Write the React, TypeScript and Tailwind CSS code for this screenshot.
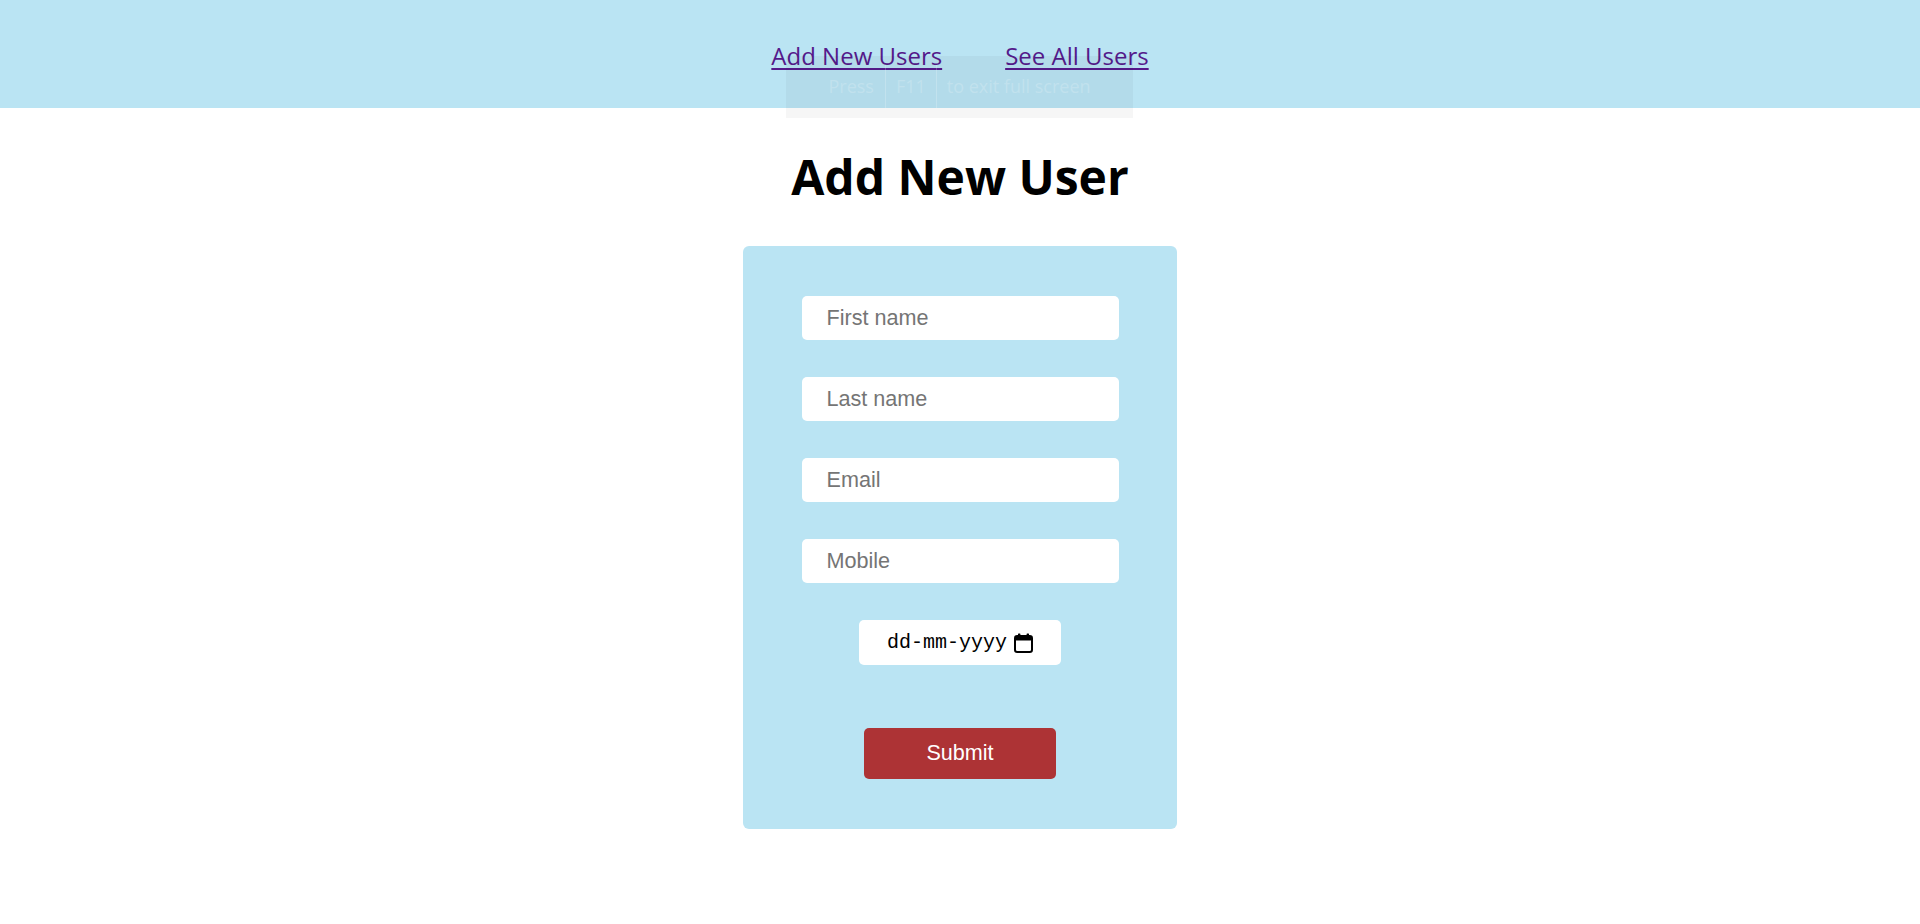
import { useState } from "react";

const FIELDS = [
  { name: "firstName", placeholder: "First name", type: "text" },
  { name: "lastName", placeholder: "Last name", type: "text" },
  { name: "email", placeholder: "Email", type: "email" },
  { name: "mobile", placeholder: "Mobile", type: "tel" }
] as const;

function CalendarGlyph() {
  return (
    <svg width="19" height="20" viewBox="0 0 19 20" aria-hidden>
      <rect x="4" y="0.5" width="2.4" height="4" rx="0.6" fill="#000" />
      <rect x="12.6" y="0.5" width="2.4" height="4" rx="0.6" fill="#000" />
      <rect x="1" y="3" width="17" height="16" rx="2.2" fill="none" stroke="#000" strokeWidth="2" />
      <rect x="1" y="3" width="17" height="4.5" rx="1.5" fill="#000" />
    </svg>
  );
}

function DateField() {
  return (
    <div className="mx-auto mt-[37px] flex h-[45px] w-[202px] items-center justify-center gap-[7px] rounded-[5px] bg-white">
      <span className="font-['Liberation_Mono',monospace] text-[20px] leading-none text-black">
        dd-mm-yyyy
      </span>
      <CalendarGlyph />
    </div>
  );
}

export default function App() {
  const [values, setValues] = useState<Record<string, string>>({});

  return (
    <div className="relative min-h-[924px] bg-white">
      <header className="h-[108px] bg-[#bae4f3] pt-[40px]">
        <nav className="flex justify-center gap-[63px] font-['Open_Sans',sans-serif] text-[24px] leading-[32px]">
          <a href="#" className="text-[#551a8b] underline underline-offset-[3px]">
            Add New Users
          </a>
          <a href="#" className="text-[#551a8b] underline underline-offset-[3px]">
            See All Users
          </a>
        </nav>
      </header>

      <h1 className="mt-[41px] text-center font-['Open_Sans',sans-serif] text-[48px] font-bold leading-[56px] text-black">
        Add New User
      </h1>

      <form
        className="mx-auto mt-[41px] w-[434px] rounded-[6px] bg-[#bae4f3] pb-[50px] pt-[50px]"
        onSubmit={(e) => e.preventDefault()}
      >
        {FIELDS.map((f, i) => (
          <input
            key={f.name}
            type={f.type}
            placeholder={f.placeholder}
            value={values[f.name] ?? ""}
            onChange={(e) => setValues({ ...values, [f.name]: e.target.value })}
            className={`mx-auto block h-[44px] w-[317px] rounded-[5px] bg-white pl-[25px] font-['Liberation_Sans',Arial,sans-serif] text-[21.6px] text-black outline-none placeholder:text-[#757575] ${
              i > 0 ? "mt-[37px]" : ""
            }`}
          />
        ))}

        <DateField />

        <button
          type="submit"
          className="mx-auto mt-[63px] block h-[51px] w-[192px] rounded-[5px] bg-[#ad3335] font-['Liberation_Sans',Arial,sans-serif] text-[21.6px] text-white"
        >
          Submit
        </button>
      </form>

      {/* browser fullscreen hint, fading out */}
      <div className="pointer-events-none absolute left-[786px] top-[56px] flex h-[62px] w-[347px] items-stretch justify-center bg-black/[0.035] pb-[10px] pt-[9px] font-['Open_Sans',sans-serif] text-[18px] text-white/20">
        <span className="flex items-center pr-[11px]">Press</span>
        <span className="flex items-center border-x border-white/20 px-[10px]">F11</span>
        <span className="flex items-center pl-[10px]">to exit full screen</span>
      </div>
    </div>
  );
}
